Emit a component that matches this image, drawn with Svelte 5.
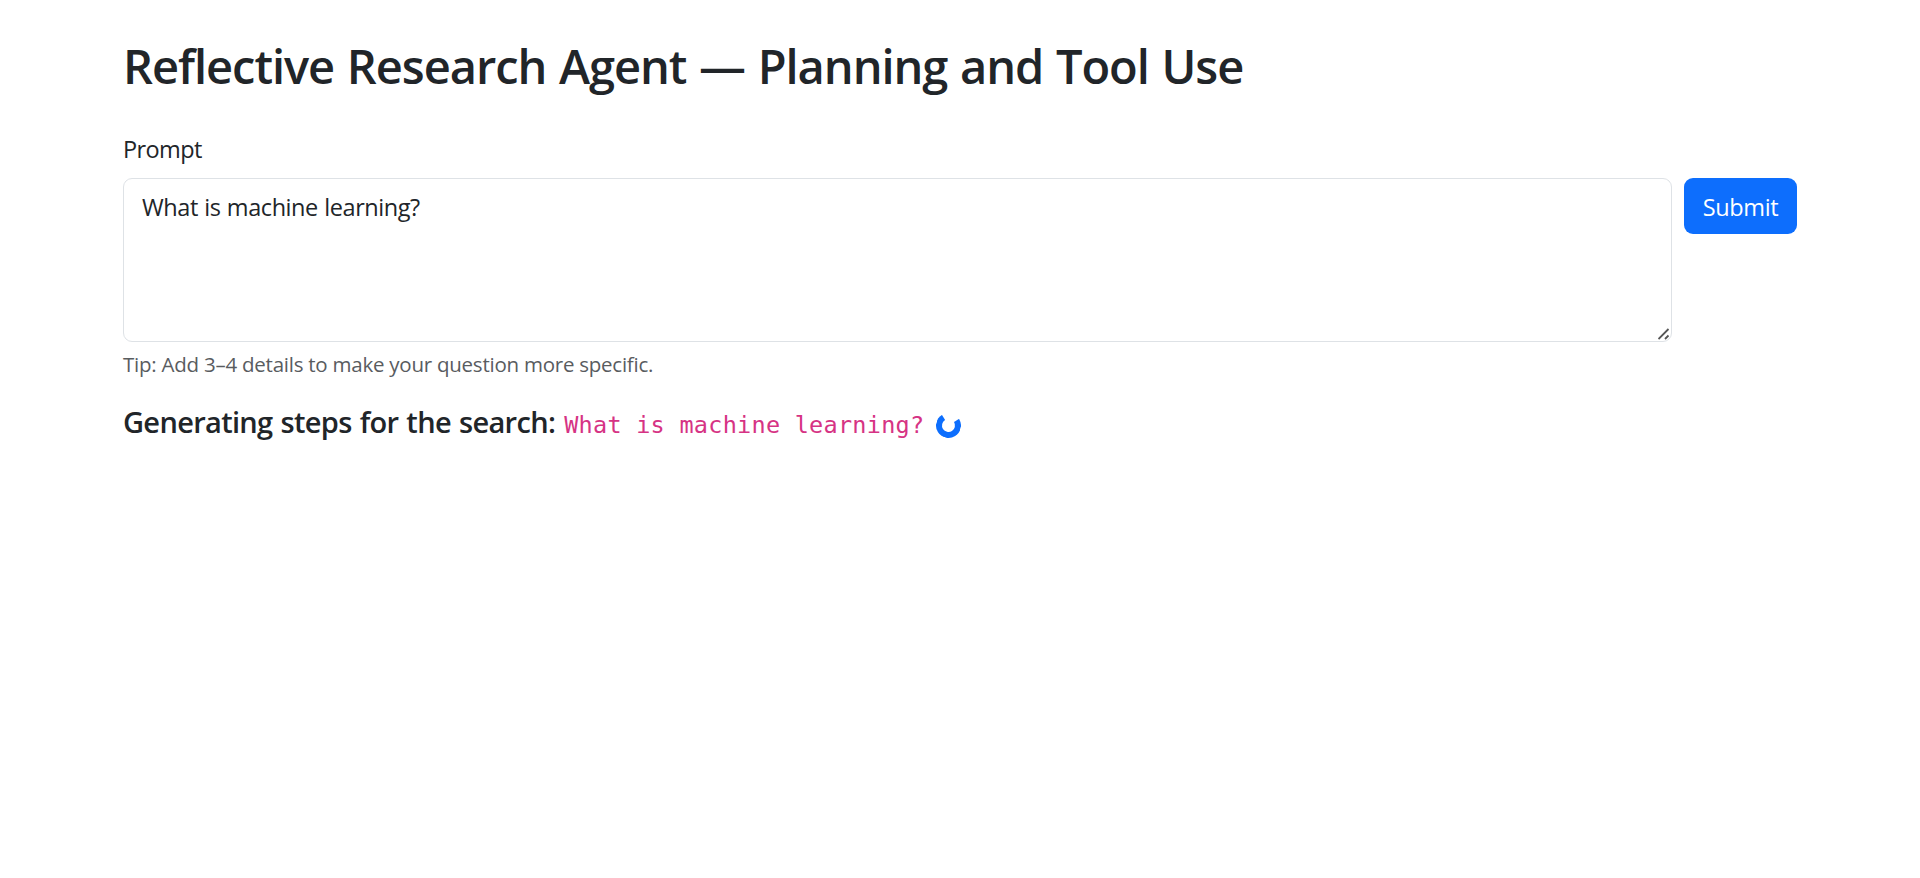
<script>
  let prompt = $state('What is machine learning?');
  const query = 'What is machine learning?';
</script>

<main>
  <h1>Reflective Research Agent — Planning and Tool Use</h1>
  <label for="prompt">Prompt</label>
  <div class="row">
    <div class="field">
      <textarea id="prompt" spellcheck="false" bind:value={prompt}></textarea>
      <svg class="grip" width="12" height="12" viewBox="0 0 12 12" aria-hidden="true">
        <path d="M.5 11 10.5 1M7 11 10.5 7.5" fill="none" stroke="#555" stroke-width="1.8" />
      </svg>
    </div>
    <button type="button">Submit</button>
  </div>
  <p class="tip">Tip: Add 3–4 details to make your question more specific.</p>
  <div class="status">
    <h2>Generating steps for the search:</h2>
    <code>{query}</code>
    <span class="spinner" role="status"></span>
  </div>
</main>

<style>
  :global(body) {
    margin: 0;
    background: #fff;
  }
  main {
    box-sizing: border-box;
    padding: 37px 123px 0;
    font-family: 'Open Sans', 'Noto Sans', sans-serif;
    color: #212529;
    font-size: 23.5px;
    line-height: 36px;
  }
  h1 {
    margin: 0 0 36px;
    font-size: 47px;
    line-height: 58px;
    font-weight: 600;
    letter-spacing: -1.04px;
    word-spacing: 1.5px;
    white-space: nowrap;
  }
  label {
    display: block;
    height: 36px;
    margin-bottom: 11px;
    letter-spacing: -0.6px;
  }
  .row {
    display: flex;
    align-items: flex-start;
    gap: 12px;
  }
  .field {
    position: relative;
    flex: 1;
    height: 164px;
  }
  textarea {
    box-sizing: border-box;
    display: block;
    width: 100%;
    height: 164px;
    padding: 10px 18px;
    border: 1px solid #dee2e6;
    border-radius: 9px;
    background: #fff;
    color: #212529;
    font: inherit;
    letter-spacing: -0.43px;
    word-spacing: 0.7px;
    resize: none;
    outline: none;
  }
  .grip {
    position: absolute;
    right: 2px;
    bottom: 2px;
  }
  button {
    box-sizing: border-box;
    width: 113px;
    height: 56px;
    padding: 1px 0 0;
    border: 0;
    border-radius: 9px;
    background: #0d6efd;
    color: #fff;
    font: inherit;
    letter-spacing: -0.35px;
  }
  .tip {
    margin: 6px 0 0;
    font-size: 20.5px;
    line-height: 32px;
    letter-spacing: -0.24px;
    color: #595c5f;
  }
  .status {
    display: flex;
    align-items: baseline;
    margin-top: 24px;
    height: 36px;
  }
  h2 {
    margin: 0;
    font-size: 29px;
    line-height: 36px;
    font-weight: 600;
    letter-spacing: -0.68px;
    word-spacing: 1.2px;
    white-space: nowrap;
  }
  code {
    margin-left: 9px;
    font-family: 'DejaVu Sans Mono', monospace;
    font-size: 23.5px;
    letter-spacing: 0.26px;
    color: #d63384;
    white-space: nowrap;
  }
  .spinner {
    box-sizing: border-box;
    width: 25px;
    height: 25px;
    margin-left: 12px;
    border: 6px solid #0d6efd;
    border-top-color: transparent;
    border-radius: 50%;
    transform: translateY(5px) rotate(13deg);
  }
</style>
